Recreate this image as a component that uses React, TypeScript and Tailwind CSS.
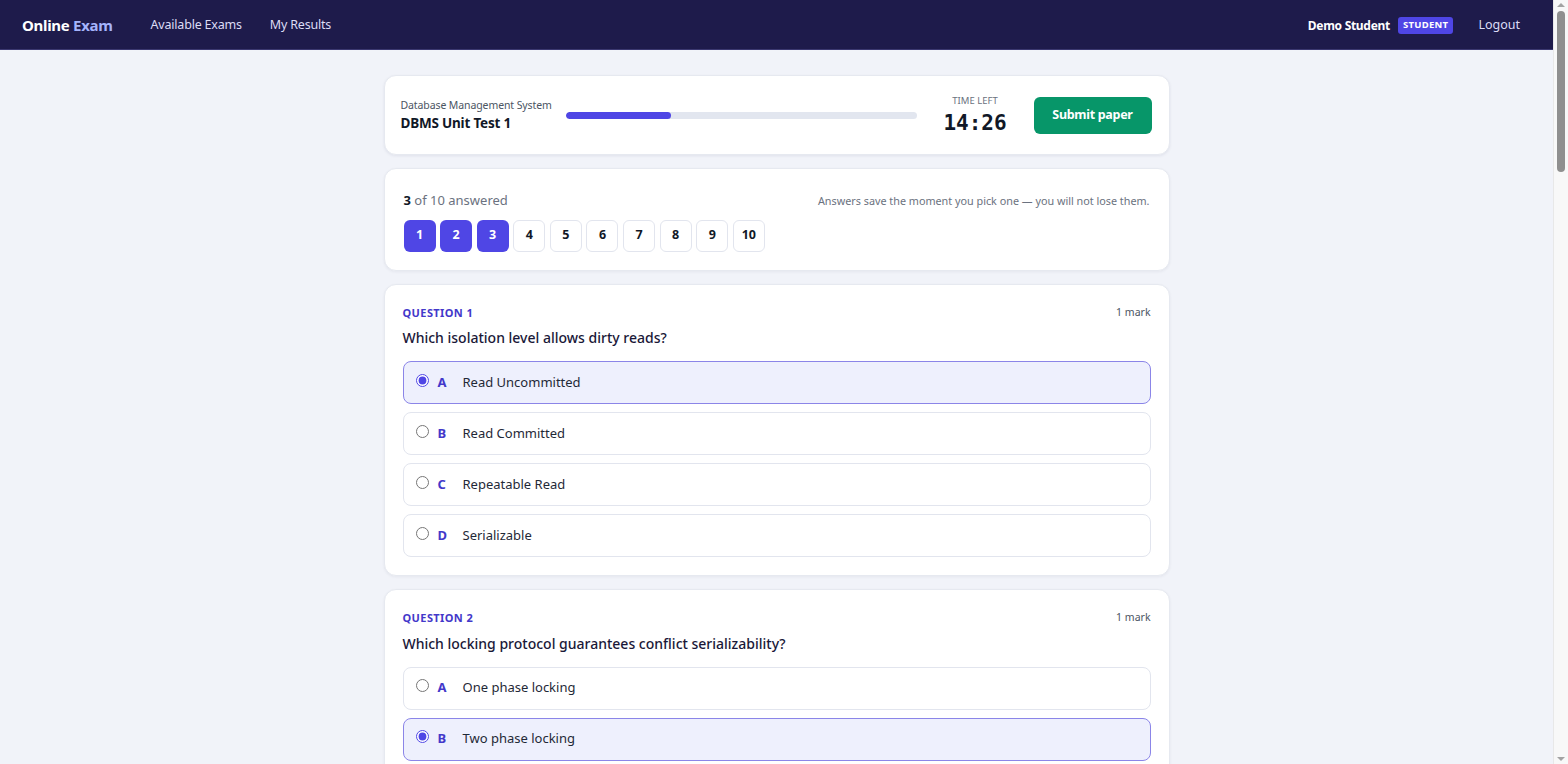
import React from "react";

type Question = {
  text: string;
  marks: number;
  options: string[];
  picked?: number;
};

const questions: Question[] = [
  {
    text: "Which isolation level allows dirty reads?",
    marks: 1,
    options: ["Read Uncommitted", "Read Committed", "Repeatable Read", "Serializable"],
    picked: 0,
  },
  {
    text: "Which locking protocol guarantees conflict serializability?",
    marks: 1,
    options: ["One phase locking", "Two phase locking", "Timestamp locking", "Shared locking"],
    picked: 1,
  },
  {
    text: "Which normal form removes transitive dependencies?",
    marks: 1,
    options: ["1NF", "2NF", "3NF", "BCNF"],
    picked: 2,
  },
  {
    text: "Which SQL command is used to remove a table completely?",
    marks: 1,
    options: ["DELETE", "TRUNCATE", "DROP", "REMOVE"],
  },
  {
    text: "A primary key can contain which of the following?",
    marks: 1,
    options: ["Duplicate values", "NULL values", "Unique, non-null values", "Only numbers"],
  },
  {
    text: "Which index structure is most common in relational databases?",
    marks: 1,
    options: ["Hash table", "B+ tree", "Linked list", "Heap"],
  },
  {
    text: "What does the 'D' in ACID stand for?",
    marks: 1,
    options: ["Durability", "Dependency", "Distribution", "Deletion"],
  },
  {
    text: "Which join returns all rows from both tables?",
    marks: 1,
    options: ["Inner join", "Left join", "Full outer join", "Cross join"],
  },
  {
    text: "Which key references the primary key of another table?",
    marks: 1,
    options: ["Candidate key", "Foreign key", "Super key", "Composite key"],
  },
  {
    text: "Which recovery technique uses a log of changes?",
    marks: 1,
    options: ["Shadow paging", "Write-ahead logging", "Checkpoint only", "Mirroring"],
  },
];

const letters = ["A", "B", "C", "D"];

function Header() {
  return (
    <header className="h-[50px] shrink-0 bg-[#1e1b4b] border-b border-[#3b3870] flex items-center pl-[22px] pr-[33px] pt-[2px]">
      <div className="text-[15px] font-bold tracking-[-0.3px] text-white">
        Online <span className="text-[#a5b4fc]">Exam</span>
      </div>
      <nav className="ml-[38px] flex items-center gap-[28px] text-[12.5px] tracking-[-0.2px] text-[#dcdcf5]">
        <span>Available Exams</span>
        <span>My Results</span>
      </nav>
      <div className="ml-auto flex items-center">
        <span className="text-[12px] font-bold tracking-[-0.3px] text-white">Demo Student</span>
        <span className="ml-2 rounded-[3px] bg-[#4f46e5] px-[5px] py-[1px] text-[9.5px] font-bold tracking-[0.3px] text-white">
          STUDENT
        </span>
        <span className="ml-[25px] text-[12.5px] text-[#dcdcf5]">Logout</span>
      </div>
    </header>
  );
}

function TopCard() {
  return (
    <div className="flex h-[80px] items-center rounded-xl border border-[#e6e9f0] bg-white pl-4 pr-[17px] shadow-[0_1px_3px_rgba(30,27,75,0.08)]">
      <div className="w-[150px] shrink-0 whitespace-nowrap">
        <div className="text-[10.5px] leading-[14px] tracking-[-0.1px] text-[#4b5563]">Database Management System</div>
        <div className="mt-[2px] text-[13.5px] font-bold leading-[18px] tracking-[-0.2px] text-[#111827]">DBMS Unit Test 1</div>
      </div>
      <div className="ml-[15px] h-[7px] flex-1 overflow-hidden rounded-full bg-[#e2e6ef]">
        <div className="h-full rounded-full bg-[#4f46e5]" style={{ width: "30%" }} />
      </div>
      <div className="ml-[25px] flex w-[67px] flex-col items-center">
        <div className="text-[9.5px] leading-[12px] text-[#6b7280]">TIME LEFT</div>
        <div className="mt-[4px] font-['DejaVu_Sans_Mono',monospace] text-[21px] font-bold leading-[24px] text-[#111827]">
          14:26
        </div>
      </div>
      <button className="ml-[25px] h-[37px] w-[118px] rounded-md bg-[#079669] text-[12.5px] font-bold tracking-[-0.3px] text-white">
        Submit paper
      </button>
    </div>
  );
}

function ProgressCard() {
  return (
    <div className="rounded-xl border border-[#e6e9f0] bg-white px-[19px] pt-[22px] pb-[18px] shadow-[0_1px_3px_rgba(30,27,75,0.06)]">
      <div className="flex items-center justify-between">
        <div className="text-[13px] text-[#6b7280]">
          <span className="font-bold text-[#111827]">3</span> of 10 answered
        </div>
        <div className="text-[10.8px] text-[#6b7280]">
          Answers save the moment you pick one — you will not lose them.
        </div>
      </div>
      <div className="mt-[9px] flex gap-[4.6px]">
        {Array.from({ length: 10 }, (_, i) => {
          const done = i < 3;
          return (
            <div
              key={i}
              className={
                done
                  ? "flex h-8 w-8 items-center justify-center rounded-md bg-[#4f46e5] text-[12.5px] font-bold text-white"
                  : "flex h-8 w-8 items-center justify-center rounded-md border border-[#e2e5ee] bg-white text-[12.5px] font-bold text-[#111827]"
              }
            >
              {i + 1}
            </div>
          );
        })}
      </div>
    </div>
  );
}

function QuestionCard({ q, index }: { q: Question; index: number }) {
  return (
    <div className="rounded-xl border border-[#e6e9f0] bg-white px-[18px] pt-[20px] pb-[18px] shadow-[0_1px_3px_rgba(30,27,75,0.06)]">
      <div className="flex items-center justify-between">
        <div className="text-[11px] font-bold tracking-[0.4px] text-[#4338ca]">QUESTION {index + 1}</div>
        <div className="text-[10.5px] text-[#4b5563]">
          {q.marks} mark{q.marks > 1 ? "s" : ""}
        </div>
      </div>
      <div className="mt-[7px] text-[14px] font-medium leading-[20px] text-[#1a1838]">{q.text}</div>
      <div className="mt-[13px] flex flex-col gap-2">
        {q.options.map((opt, i) => {
          const sel = q.picked === i;
          return (
            <label
              key={i}
              className={
                sel
                  ? "flex h-[43px] items-center rounded-lg border border-[#8b85e8] bg-[#eef0fd] pl-[12px]"
                  : "flex h-[43px] items-center rounded-lg border border-[#e2e5ee] bg-white pl-[12px]"
              }
            >
              <input
                type="radio"
                name={`q${index}`}
                defaultChecked={sel}
                className="mb-[5px] h-[13px] w-[13px] accent-[#4f46e5]"
              />
              <span className="ml-[9px] w-[25px] text-[13px] font-bold text-[#4338ca]">{letters[i]}</span>
              <span className="text-[13px] text-[#1f2937]">{opt}</span>
            </label>
          );
        })}
      </div>
    </div>
  );
}

function Scrollbar() {
  return (
    <div className="flex w-[15px] shrink-0 flex-col items-center border-l border-[#e8e8e8] bg-[#f8f8f8]">
      <div className="mt-[3px] h-0 w-0 border-x-[4px] border-b-[4px] border-x-transparent border-b-[#a3a3a3]" />
      <div className="mt-[4px] h-[161px] w-[8px] rounded-full bg-[#8f8f8f]" />
      <div className="mb-[3px] mt-auto h-0 w-0 border-x-[4px] border-t-[4px] border-x-transparent border-t-[#a3a3a3]" />
    </div>
  );
}

export default function App() {
  return (
    <div className="flex h-screen overflow-hidden bg-[#f1f3f9] font-['Noto_Sans','Open_Sans',sans-serif]">
      <div className="flex min-w-0 flex-1 flex-col overflow-hidden">
        <Header />
        <main className="mx-auto flex w-[786px] flex-col gap-[13px] pt-[25px] pb-10">
          <TopCard />
          <ProgressCard />
          {questions.map((q, i) => (
            <QuestionCard key={i} q={q} index={i} />
          ))}
        </main>
      </div>
      <Scrollbar />
    </div>
  );
}
